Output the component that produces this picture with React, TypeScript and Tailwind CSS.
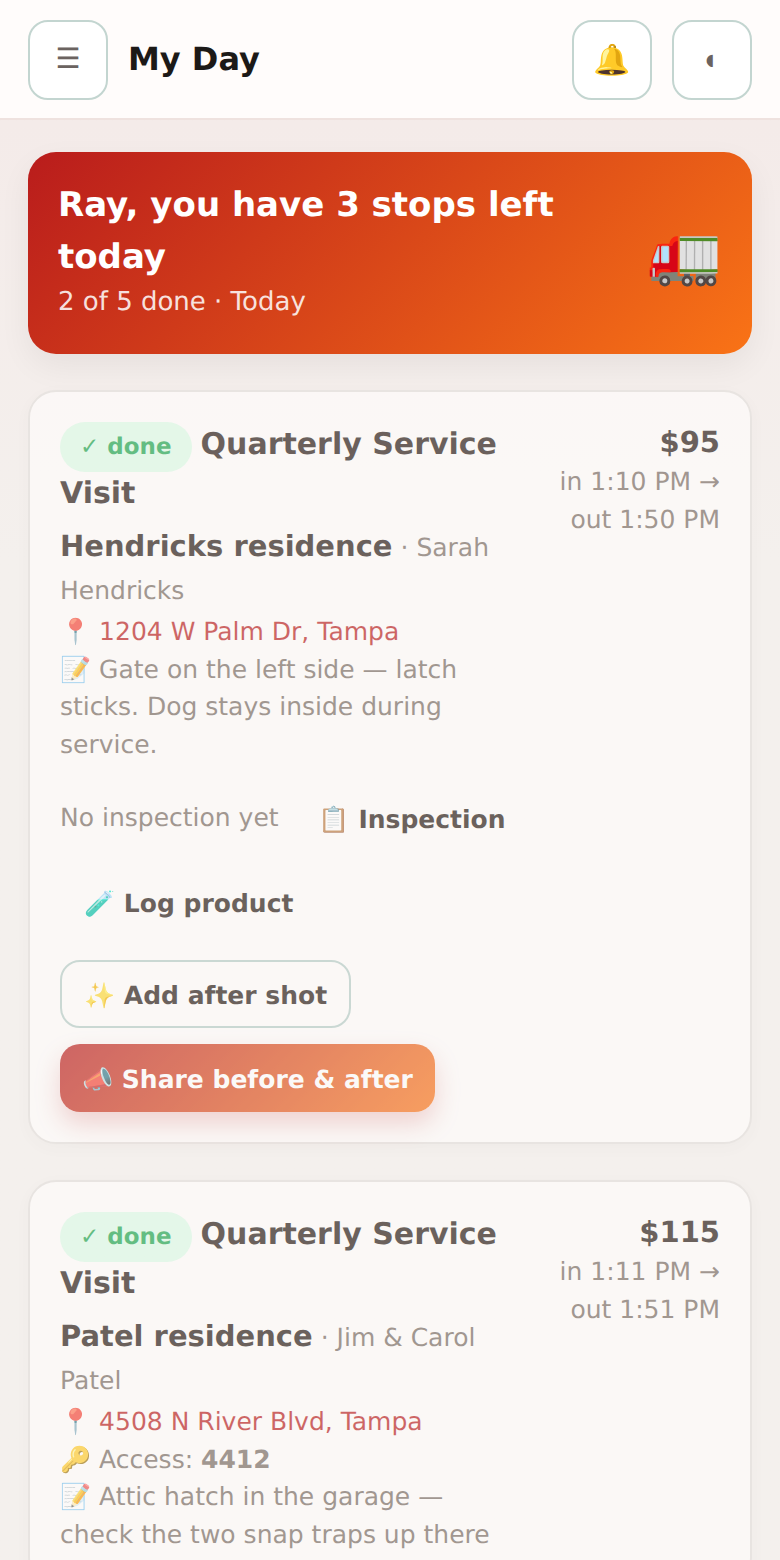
import React from "react";

const font = '"DejaVu Sans", "Noto Color Emoji", sans-serif';

const Badge: React.FC = () => (
  <span className="mr-[9px] inline-block rounded-full bg-[#dcfce7] px-5 py-2 text-[23px] font-bold leading-[34px] text-[#16a34a]">
    ✓ done
  </span>
);

type StopProps = {
  price: string;
  timeIn: string;
  timeOut: string;
  name: string;
  contact: string;
  address: string;
  access?: string;
  notes: string;
  children?: React.ReactNode;
};

const StopCard: React.FC<StopProps> = ({
  price,
  timeIn,
  timeOut,
  name,
  contact,
  address,
  access,
  notes,
  children,
}) => (
  <div className="rounded-[28px] border-2 border-[#e3dfdc] bg-[#fffdfc] p-[30px] opacity-65 shadow-[0_4px_16px_rgba(0,0,0,0.03)]">
    <div className="flex justify-between gap-4">
      <div className="w-[480px] shrink-0">
        <div className="text-[30px] font-bold leading-[44px] text-[#221510]">
          <Badge />
          Quarterly Service Visit
        </div>
        <div className="mt-[9px] text-[25px] leading-[43px] text-[#75685f]">
          <span className="text-[29px] font-bold text-[#221510]">{name}</span>{" "}
          · {contact}
        </div>
        <div className="mt-px text-[25px] leading-[37.5px] text-[#b91c1c]">
          📍 {address}
        </div>
        {access && (
          <div className="text-[25px] leading-[37.5px] text-[#75685f]">
            🔑 Access: <b className="font-bold">{access}</b>
          </div>
        )}
        <div className="max-w-[460px] text-[25px] leading-[37.5px] text-[#75685f]">
          📝 {notes}
        </div>
        {children}
      </div>
      <div className="flex-1 text-right">
        <div className="text-[29px] font-bold leading-[41px] text-[#221510]">
          {price}
        </div>
        <div className="text-[25px] leading-[38px] text-[#75685f]">
          {timeIn} →
          <br />
          {timeOut}
        </div>
      </div>
    </div>
  </div>
);

const App: React.FC = () => {
  return (
    <div
      className="h-[1560px] overflow-hidden bg-[#f4f0ed] [text-rendering:geometricPrecision]"
      style={{ fontFamily: font }}
    >
      <div className="flex items-center gap-5 border-b-2 border-[#efe2df] bg-[#fffcfb] px-7 pb-[18px] pt-5">
        <div className="flex h-20 w-20 items-center justify-center rounded-[20px] border-2 border-[#c3d5d0] bg-white pb-0.5 text-[28px] text-[#6b6360]">
          ☰
        </div>
        <h1 className="pb-0.5 text-[32px] font-bold text-[#1c1917]">My Day</h1>
        <div className="ml-auto flex gap-5">
          <div className="flex h-20 w-20 items-center justify-center rounded-[20px] border-2 border-[#c3d5d0] bg-white text-[30px]">
            🔔
          </div>
          <div className="flex h-20 w-20 items-center justify-center rounded-[20px] border-2 border-[#c3d5d0] bg-white pr-1 text-[16px] text-[#6b6360]">
            ◖
          </div>
        </div>
      </div>
      <div className="flex flex-col gap-9 bg-gradient-to-b from-[#f4ebe9] to-[#f4f0ed] to-[30%] px-7 pt-8">
        <div className="flex items-center justify-between rounded-[28px] bg-[linear-gradient(135deg,#b91c1c,#f97316)] px-[30px] pb-[33px] pt-[27px] text-white shadow-[0_12px_32px_rgba(0,0,0,0.06)]">
          <div>
            <div className="text-[34px] font-bold leading-[52px]">
              Ray, you have 3 stops left
              <br />
              today
            </div>
            <div className="text-[26px] leading-[38px] opacity-85">
              2 of 5 done · Today
            </div>
          </div>
          <div className="mt-2 text-[60px] leading-none">🚛</div>
        </div>

        <StopCard
          price="$95"
          timeIn="in 1:10 PM"
          timeOut="out 1:50 PM"
          name="Hendricks residence"
          contact="Sarah Hendricks"
          address="1204 W Palm Dr, Tampa"
          notes="Gate on the left side — latch sticks. Dog stays inside during service."
        >
          <div className="mt-[23px] flex flex-wrap items-center gap-4 text-[25px] text-[#75685f]">
            <span className="pb-1">No inspection yet</span>
            <span className="flex h-[68px] items-center whitespace-pre px-6 font-bold text-[#221510]">
              📋 Inspection
            </span>
            <span className="flex h-[68px] items-center whitespace-pre px-6 font-bold text-[#221510]">
              🧪 Log product
            </span>
          </div>
          <div className="mt-[22px] flex h-[68px] w-fit items-center whitespace-pre rounded-[20px] border-2 border-[#b5ccc6] px-[22px] pt-1 text-[25px] font-bold text-[#221510]">
            ✨ Add after shot
          </div>
          <div className="mt-4 flex h-[68px] w-fit items-center whitespace-pre rounded-[20px] bg-[linear-gradient(135deg,#b91c1c,#f97316)] px-[22px] pt-1 text-[25px] font-bold text-white shadow-[0_12px_24px_rgba(185,28,28,0.25)]">
            📣 Share before &amp; after
          </div>
        </StopCard>

        <StopCard
          price="$115"
          timeIn="in 1:11 PM"
          timeOut="out 1:51 PM"
          name="Patel residence"
          contact="Jim & Carol Patel"
          address="4508 N River Blvd, Tampa"
          access="4412"
          notes="Attic hatch in the garage — check the two snap traps up there"
        />
      </div>
    </div>
  );
};

export default App;
